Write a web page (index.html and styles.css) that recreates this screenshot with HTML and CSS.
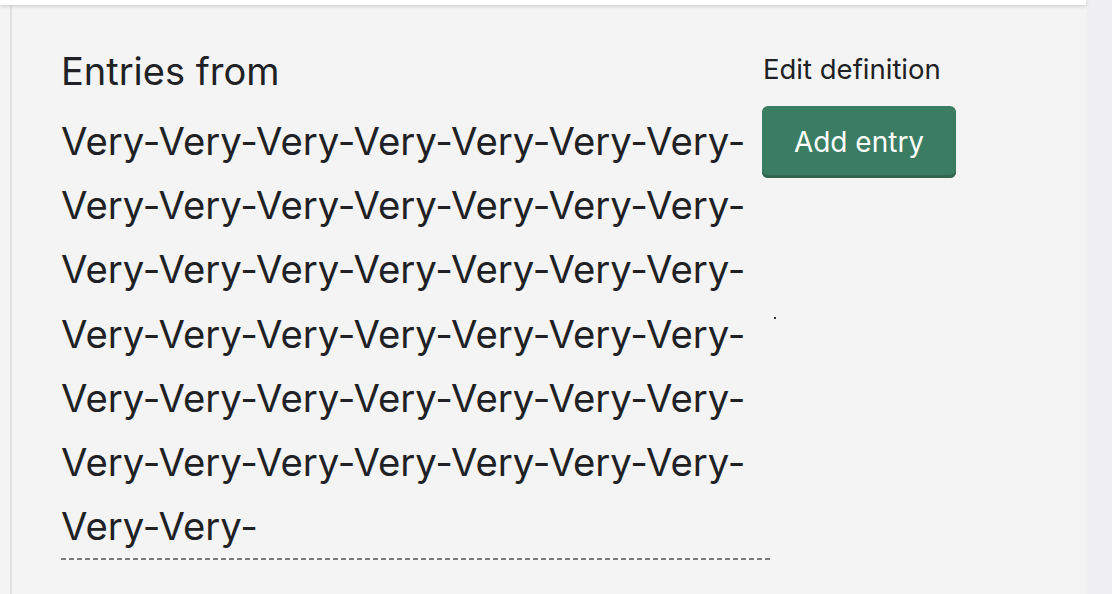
FILE: index.html
```html
<!DOCTYPE html>
<html>
<head>
<meta charset="utf-8">
<link rel="stylesheet" href="styles.css">
</head>
<body>
<div class="app">
  <div class="main">
    <div class="topbar"></div>
    <div class="content">
      <div class="left">
        <h1 class="title">Entries from</h1>
        <div class="long">Very-Very-Very-Very-Very-Very-Very-Very-Very-Very-Very-Very-Very-Very-Very-Very-Very-Very-Very-Very-Very-Very-Very-Very-Very-Very-Very-Very-Very-Very-Very-Very-Very-Very-Very-Very-Very-Very-Very-Very-Very-Very-Very-Very-</div>
        <div class="dashed"></div>
      </div>
      <div class="right">
        <a class="edit">Edit definition</a>
        <button class="add">Add entry</button>
        <span class="dot"></span>
      </div>
    </div>
  </div>
  <div class="side"></div>
</div>
</body>
</html>
```
FILE: styles.css
```css
html, body {
  margin: 0;
  padding: 0;
  height: 100%;
  overflow: hidden;
}
body {
  font-family: Inter, "Noto Sans", sans-serif;
  color: #202124;
  background: #f4f4f4;
}
.app {
  display: flex;
  height: 594px;
}
.main {
  width: 1086px;
  display: flex;
  flex-direction: column;
  background: #f4f4f4;
}
.topbar {
  height: 5px;
  background: #ffffff;
  box-shadow: 0 1px 4px rgba(0,0,0,0.18);
  position: relative;
  z-index: 1;
}
.content {
  flex: 1;
  margin-left: 10px;
  border-left: 2px solid #e2e2e2;
  padding-left: 49px;
  display: flex;
  position: relative;
}
.left {
  width: 701px;
}
.title {
  margin: 0;
  padding-top: 43px;
  font-size: 38px;
  font-weight: 400;
  line-height: 46px;
  letter-spacing: 0;
}
.long {
  margin-top: 15px;
  font-size: 38.3px;
  line-height: 64.2px;
  word-break: break-all;
}
.dashed {
  width: 711px;
  height: 2px;
  margin-top: 0px;
  background-image: linear-gradient(to right, #7a7a7c 0 5px, transparent 5px 8px);
  background-size: 8px 2px;
  background-repeat: repeat-x;
}
.right {
  display: flex;
  flex-direction: column;
  align-items: flex-start;
  padding-top: 48px;
}
.edit {
  font-size: 27.5px;
  line-height: 32px;
  color: #202124;
  margin-left: 1px;
}
.add {
  margin-top: 21px;
  width: 194px;
  height: 72px;
  border: none;
  border-radius: 6px;
  background: #3a7d62;
  box-shadow: inset 0 -3px 0 #2e6650;
  color: #ffffff;
  font-family: Inter, "Noto Sans", sans-serif;
  font-size: 28px;
  padding: 0;
}
.dot {
  position: absolute;
  left: 762px;
  top: 312px;
  width: 2px;
  height: 2px;
  background: #333;
}
.side {
  flex: 1;
  background: #f0f0f2;
}
```
